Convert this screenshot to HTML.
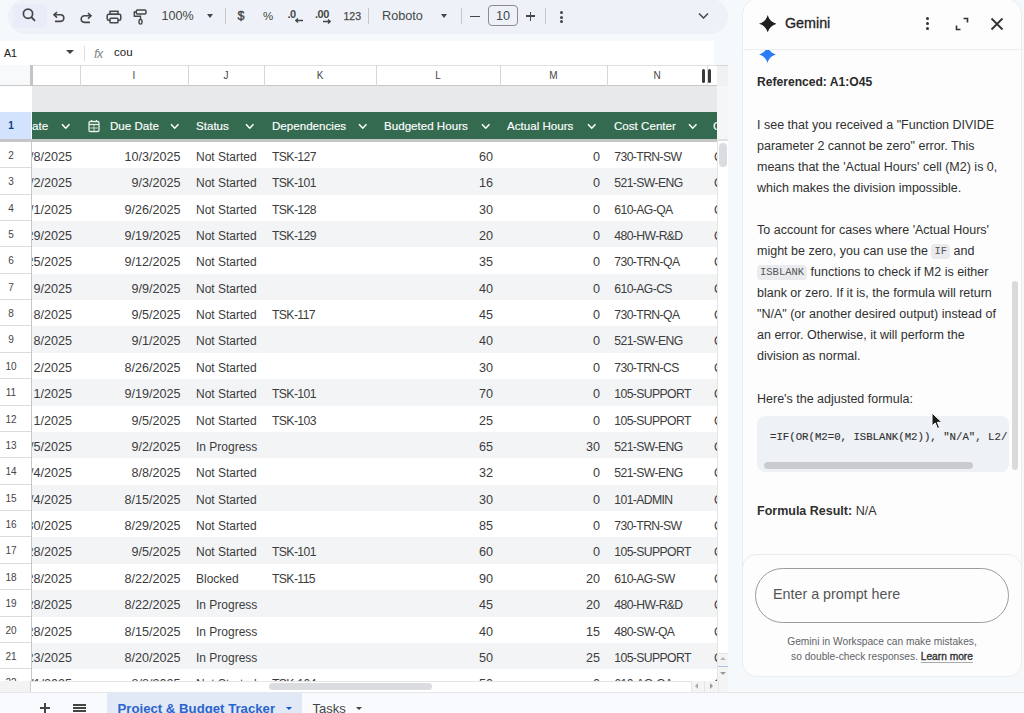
<!DOCTYPE html><html><head><meta charset="utf-8"><style>
*{margin:0;padding:0;box-sizing:border-box}
html,body{width:1024px;height:713px;overflow:hidden;background:#f5f9fb;font-family:"Liberation Sans",sans-serif;position:relative}
.a{position:absolute}
.t{position:absolute;white-space:nowrap;line-height:1}
.cell{position:absolute;white-space:nowrap;font-size:12px;color:#3c3c3c;line-height:26px;height:26px;padding-top:2px}
.num{font-size:12.6px}
.caps{font-size:12.2px;letter-spacing:-0.6px}
.r{text-align:right}
.rn{position:absolute;left:0;width:31px;font-size:10px;color:#444;text-align:center;text-indent:-9px;line-height:28px;border-bottom:1px solid #dcdcdc;background:#fff}
.hd{position:absolute;color:#fff;font-size:11.6px;line-height:27px;top:112px;white-space:nowrap;-webkit-text-stroke:0.15px #fff}
.chev{position:absolute;top:123px;width:9.5px;height:7px}
.g{font-size:12.5px;color:#303030;line-height:21px}
.chip{display:inline-block;font-family:'Liberation Mono',monospace;font-size:10.5px;color:#555;background:#e9ebee;border-radius:4px;padding:0 3px;line-height:15px;vertical-align:1px}
</style></head><body>

<div class="a" style="left:8px;top:-1px;width:720px;height:35px;border-radius:18px;background:#eef2f8"></div>
<div class="a" style="left:13px;top:3.5px;width:34px;height:24px;border-radius:4px;background:#e9edf9"></div>
<svg class="a" style="left:20px;top:6px" width="18" height="18" viewBox="0 0 18 18"><circle cx="8" cy="7.7" r="4.6" fill="none" stroke="#444746" stroke-width="1.7"/><line x1="11.3" y1="11" x2="15" y2="14.8" stroke="#444746" stroke-width="1.8"/></svg>
<svg class="a" style="left:52px;top:10px" width="14" height="13" viewBox="0 0 14 13"><path d="M5 2 L2 4.8 L5 7.6" fill="none" stroke="#444746" stroke-width="1.6"/><path d="M2.5 4.8 H8.5 A3.3 3.3 0 0 1 8.5 11.4 H3" fill="none" stroke="#444746" stroke-width="1.6"/></svg>
<svg class="a" style="left:79px;top:10.5px" width="14" height="13" viewBox="0 0 14 13"><path d="M9 2 L12 4.8 L9 7.6" fill="none" stroke="#444746" stroke-width="1.6"/><path d="M11.5 4.8 H5.5 A3.3 3.3 0 0 0 5.5 11.4 H11" fill="none" stroke="#444746" stroke-width="1.6"/></svg>
<svg class="a" style="left:106px;top:9.5px" width="16" height="14" viewBox="0 0 16 14"><rect x="4" y="1.3" width="8" height="3" fill="none" stroke="#444746" stroke-width="1.5"/><rect x="1.2" y="4.3" width="13.6" height="6" rx="1.5" fill="none" stroke="#444746" stroke-width="1.5"/><rect x="4" y="8.3" width="8" height="4.5" rx="0.8" fill="#edf2fa" stroke="#444746" stroke-width="1.5"/></svg>
<svg class="a" style="left:133px;top:8.5px" width="14" height="16" viewBox="0 0 14 16"><rect x="3.3" y="1" width="9.7" height="4" rx="1.2" fill="none" stroke="#444746" stroke-width="1.5"/><path d="M3.3 3 H1.3 V7.3 H7.5 V10.5" fill="none" stroke="#444746" stroke-width="1.4"/><rect x="6" y="10.5" width="3" height="4.6" rx="1.5" fill="none" stroke="#444746" stroke-width="1.4"/></svg>
<div class="t" style="left:161.5px;top:10px;font-size:12.6px;color:#444746">100%</div>
<div class="a" style="left:207px;top:14px;width:0;height:0;border-left:3px solid transparent;border-right:3px solid transparent;border-top:4px solid #444746"></div>
<div class="a" style="left:224.5px;top:8px;width:1px;height:16px;background:#c7c7c7"></div>
<div class="t" style="left:237.5px;top:9.5px;font-size:12.5px;color:#444746;-webkit-text-stroke:0.4px #444746">$</div>
<div class="t" style="left:263px;top:10.5px;font-size:11.5px;color:#444746">%</div>
<div class="t" style="left:287.5px;top:8.5px;font-size:11px;color:#444746;font-weight:bold;letter-spacing:-0.5px">.0</div>
<svg class="a" style="left:295px;top:18px" width="8" height="5" viewBox="0 0 8 5"><path d="M3 0.5 L0.8 2.5 L3 4.5 M1 2.5 H8" fill="none" stroke="#444746" stroke-width="1.3"/></svg>
<div class="t" style="left:315px;top:8.5px;font-size:11px;color:#444746;font-weight:bold;letter-spacing:-0.5px">.00</div>
<svg class="a" style="left:322.5px;top:18.5px" width="8" height="5" viewBox="0 0 8 5"><path d="M5 0.5 L7.2 2.5 L5 4.5 M0 2.5 H7" fill="none" stroke="#444746" stroke-width="1.3"/></svg>
<div class="t" style="left:343.5px;top:10.5px;font-size:10.5px;color:#444746;-webkit-text-stroke:0.25px #444746">123</div>
<div class="a" style="left:368.4px;top:8px;width:1px;height:16px;background:#c7c7c7"></div>
<div class="t" style="left:382px;top:10px;font-size:12.7px;color:#444746">Roboto</div>
<div class="a" style="left:441px;top:14px;width:0;height:0;border-left:3px solid transparent;border-right:3px solid transparent;border-top:4px solid #444746"></div>
<div class="a" style="left:461px;top:8px;width:1px;height:16px;background:#c7c7c7"></div>
<div class="a" style="left:470px;top:15.5px;width:9.5px;height:1.3px;background:#444746"></div>
<div class="a" style="left:488px;top:5px;width:30px;height:20.5px;border:1px solid #8c8c8c;border-radius:4px"></div>
<div class="t" style="left:488px;width:30px;text-align:center;top:10px;font-size:12.7px;color:#444746">10</div>
<div class="a" style="left:526px;top:15.3px;width:9px;height:1.6px;background:#444746"></div>
<div class="a" style="left:529.7px;top:11.5px;width:1.6px;height:9px;background:#444746"></div>
<div class="a" style="left:545px;top:8px;width:1px;height:16px;background:#c7c7c7"></div>
<div class="a" style="left:560px;top:11px;width:3px;height:3px;border-radius:50%;background:#444746"></div>
<div class="a" style="left:560px;top:15.5px;width:3px;height:3px;border-radius:50%;background:#444746"></div>
<div class="a" style="left:560px;top:20px;width:3px;height:3px;border-radius:50%;background:#444746"></div>
<svg class="a" style="left:698px;top:12px" width="11" height="8" viewBox="0 0 11 8"><path d="M1 1.5 L5.5 6 L10 1.5" fill="none" stroke="#444746" stroke-width="1.5"/></svg>
<div class="a" style="left:0;top:41px;width:714px;height:24px;background:#fff"></div>
<div class="t" style="left:4px;top:48px;font-size:10.5px;color:#222;-webkit-text-stroke:0.1px #222">A1</div>
<div class="a" style="left:66px;top:50px;width:0;height:0;border-left:4px solid transparent;border-right:4px solid transparent;border-top:4px solid #444"></div>
<div class="a" style="left:84px;top:46px;width:1px;height:15px;background:#ddd"></div>
<div class="t" style="left:94px;top:46.5px;font-size:13px;color:#8a8a8a;font-style:italic;letter-spacing:-0.8px">fx</div>
<div class="t" style="left:114px;top:47px;font-size:11.5px;color:#222">cou</div>
<div class="a" style="left:0;top:64.5px;width:728px;height:21.5px;background:#fff;border-bottom:1px solid #c7c7c7;border-top:1px solid #e0e0e0"></div>
<div class="a" style="left:0;top:65px;width:30px;height:21px;background:#f8f9fa;border-bottom:1px solid #c7c7c7"></div>
<div class="a" style="left:30px;top:65px;width:3px;height:21px;background:#c4c4c4"></div>
<div class="a" style="left:80px;top:65px;width:1px;height:21px;background:#d6d6d6"></div>
<div class="t" style="left:80px;width:108px;text-align:center;top:71px;font-size:10px;color:#444">I</div>
<div class="a" style="left:188px;top:65px;width:1px;height:21px;background:#d6d6d6"></div>
<div class="t" style="left:188px;width:76px;text-align:center;top:71px;font-size:10px;color:#444">J</div>
<div class="a" style="left:264px;top:65px;width:1px;height:21px;background:#d6d6d6"></div>
<div class="t" style="left:264px;width:112px;text-align:center;top:71px;font-size:10px;color:#444">K</div>
<div class="a" style="left:376px;top:65px;width:1px;height:21px;background:#d6d6d6"></div>
<div class="t" style="left:376px;width:124px;text-align:center;top:71px;font-size:10px;color:#444">L</div>
<div class="a" style="left:500px;top:65px;width:1px;height:21px;background:#d6d6d6"></div>
<div class="t" style="left:500px;width:107px;text-align:center;top:71px;font-size:10px;color:#444">M</div>
<div class="a" style="left:607px;top:65px;width:1px;height:21px;background:#d6d6d6"></div>
<div class="t" style="left:607px;width:100px;text-align:center;top:71px;font-size:10px;color:#444">N</div>
<div class="a" style="left:707px;top:65px;width:1px;height:21px;background:#d6d6d6"></div>
<div class="a" style="left:717px;top:65px;width:11px;height:21px;background:#f0f1f2;border-top:1px solid #d6d6d6"></div>
<div class="a" style="left:717px;top:86px;width:11px;height:53px;background:#f5f6f7"></div>
<div class="a" style="left:717px;top:139px;width:11px;height:2.5px;background:#dfe1e4"></div>
<div class="a" style="left:701.5px;top:69px;width:3px;height:14px;border-radius:1.5px;background:#3a3a3a"></div>
<div class="a" style="left:708.3px;top:69px;width:3px;height:14px;border-radius:1.5px;background:#3a3a3a"></div>
<div class="a" style="left:32px;top:86px;width:685px;height:26px;background:#e8e9eb"></div>
<div class="a" style="left:0;top:86px;width:32px;height:26px;background:#fff"></div>
<div class="a" style="left:0;top:112px;width:31px;height:27px;background:#d3e3fd"></div>
<div class="t" style="left:6px;width:10px;text-align:center;top:121px;font-size:10px;color:#0b3a8c;font-weight:bold">1</div>
<div class="a" style="left:32px;top:112px;width:685px;height:27px;background:#346a50"></div>
<div class="a" style="left:0;top:139px;width:717px;height:2.5px;background:#c6c6c6"></div>
<div class="hd" style="left:32px">ate</div>
<div class="hd" style="left:110px">Due Date</div>
<div class="hd" style="left:196px">Status</div>
<div class="hd" style="left:272px">Dependencies</div>
<div class="hd" style="left:384px">Budgeted Hours</div>
<div class="hd" style="left:507px">Actual Hours</div>
<div class="hd" style="left:614px">Cost Center</div>
<svg class="chev" style="left:61px" viewBox="0 0 9.5 7"><path d="M1 1.2 L4.75 5.2 L8.5 1.2" fill="none" stroke="#fff" stroke-width="1.5"/></svg>
<svg class="chev" style="left:170px" viewBox="0 0 9.5 7"><path d="M1 1.2 L4.75 5.2 L8.5 1.2" fill="none" stroke="#fff" stroke-width="1.5"/></svg>
<svg class="chev" style="left:245px" viewBox="0 0 9.5 7"><path d="M1 1.2 L4.75 5.2 L8.5 1.2" fill="none" stroke="#fff" stroke-width="1.5"/></svg>
<svg class="chev" style="left:358px" viewBox="0 0 9.5 7"><path d="M1 1.2 L4.75 5.2 L8.5 1.2" fill="none" stroke="#fff" stroke-width="1.5"/></svg>
<svg class="chev" style="left:481px" viewBox="0 0 9.5 7"><path d="M1 1.2 L4.75 5.2 L8.5 1.2" fill="none" stroke="#fff" stroke-width="1.5"/></svg>
<svg class="chev" style="left:587px" viewBox="0 0 9.5 7"><path d="M1 1.2 L4.75 5.2 L8.5 1.2" fill="none" stroke="#fff" stroke-width="1.5"/></svg>
<svg class="chev" style="left:688px" viewBox="0 0 9.5 7"><path d="M1 1.2 L4.75 5.2 L8.5 1.2" fill="none" stroke="#fff" stroke-width="1.5"/></svg>
<svg class="a" style="left:88px;top:119px" width="12" height="14" viewBox="0 0 12 14"><rect x="1" y="2.5" width="10" height="10" rx="1.2" fill="none" stroke="#e8f0ea" stroke-width="1.3"/><line x1="1" y1="5.5" x2="11" y2="5.5" stroke="#e8f0ea" stroke-width="1.3"/><line x1="3.5" y1="1" x2="3.5" y2="3" stroke="#e8f0ea" stroke-width="1.2"/><line x1="8.5" y1="1" x2="8.5" y2="3" stroke="#e8f0ea" stroke-width="1.2"/><line x1="2" y1="9" x2="10" y2="9" stroke="#e8f0ea" stroke-width="0.8"/><line x1="6" y1="6" x2="6" y2="12" stroke="#e8f0ea" stroke-width="0.8"/></svg>
<div class="a" style="left:707px;top:112px;width:10px;height:27px;overflow:hidden"><div class="hd" style="left:6px;top:0">C</div></div>
<div class="a" style="left:0;top:141.9px;width:717px;height:539px;overflow:hidden">
<div class="a" style="left:32px;top:0.00px;width:685px;height:26.37px;background:#fff"></div>
<div class="rn" style="top:0.00px;height:26.37px">2</div>
<div class="a" style="left:32px;width:48px;top:0.00px;height:26.37px;overflow:hidden"><div class="cell r num" style="right:8px;top:0">/8/2025</div></div>
<div class="cell r num" style="left:80px;width:100.5px;top:0.00px">10/3/2025</div>
<div class="cell" style="left:196px;top:0.00px">Not Started</div>
<div class="cell caps" style="left:272px;top:0.00px">TSK-127</div>
<div class="cell r num" style="left:376px;width:117px;top:0.00px">60</div>
<div class="cell r num" style="left:500px;width:100px;top:0.00px">0</div>
<div class="cell caps" style="left:614.3px;top:0.00px">730-TRN-SW</div>
<div class="cell" style="left:714px;top:0.00px">C</div>
<div class="a" style="left:32px;top:26.37px;width:685px;height:26.37px;background:#f3f4f6"></div>
<div class="rn" style="top:26.37px;height:26.37px">3</div>
<div class="a" style="left:32px;width:48px;top:26.37px;height:26.37px;overflow:hidden"><div class="cell r num" style="right:8px;top:0">/2/2025</div></div>
<div class="cell r num" style="left:80px;width:100.5px;top:26.37px">9/3/2025</div>
<div class="cell" style="left:196px;top:26.37px">Not Started</div>
<div class="cell caps" style="left:272px;top:26.37px">TSK-101</div>
<div class="cell r num" style="left:376px;width:117px;top:26.37px">16</div>
<div class="cell r num" style="left:500px;width:100px;top:26.37px">0</div>
<div class="cell caps" style="left:614.3px;top:26.37px">521-SW-ENG</div>
<div class="cell" style="left:714px;top:26.37px">C</div>
<div class="a" style="left:32px;top:52.74px;width:685px;height:26.37px;background:#fff"></div>
<div class="rn" style="top:52.74px;height:26.37px">4</div>
<div class="a" style="left:32px;width:48px;top:52.74px;height:26.37px;overflow:hidden"><div class="cell r num" style="right:8px;top:0">/1/2025</div></div>
<div class="cell r num" style="left:80px;width:100.5px;top:52.74px">9/26/2025</div>
<div class="cell" style="left:196px;top:52.74px">Not Started</div>
<div class="cell caps" style="left:272px;top:52.74px">TSK-128</div>
<div class="cell r num" style="left:376px;width:117px;top:52.74px">30</div>
<div class="cell r num" style="left:500px;width:100px;top:52.74px">0</div>
<div class="cell caps" style="left:614.3px;top:52.74px">610-AG-QA</div>
<div class="cell" style="left:714px;top:52.74px">C</div>
<div class="a" style="left:32px;top:79.11px;width:685px;height:26.37px;background:#f3f4f6"></div>
<div class="rn" style="top:79.11px;height:26.37px">5</div>
<div class="a" style="left:32px;width:48px;top:79.11px;height:26.37px;overflow:hidden"><div class="cell r num" style="right:8px;top:0">29/2025</div></div>
<div class="cell r num" style="left:80px;width:100.5px;top:79.11px">9/19/2025</div>
<div class="cell" style="left:196px;top:79.11px">Not Started</div>
<div class="cell caps" style="left:272px;top:79.11px">TSK-129</div>
<div class="cell r num" style="left:376px;width:117px;top:79.11px">20</div>
<div class="cell r num" style="left:500px;width:100px;top:79.11px">0</div>
<div class="cell caps" style="left:614.3px;top:79.11px">480-HW-R&amp;D</div>
<div class="cell" style="left:714px;top:79.11px">C</div>
<div class="a" style="left:32px;top:105.48px;width:685px;height:26.37px;background:#fff"></div>
<div class="rn" style="top:105.48px;height:26.37px">6</div>
<div class="a" style="left:32px;width:48px;top:105.48px;height:26.37px;overflow:hidden"><div class="cell r num" style="right:8px;top:0">25/2025</div></div>
<div class="cell r num" style="left:80px;width:100.5px;top:105.48px">9/12/2025</div>
<div class="cell" style="left:196px;top:105.48px">Not Started</div>
<div class="cell caps" style="left:272px;top:105.48px"></div>
<div class="cell r num" style="left:376px;width:117px;top:105.48px">35</div>
<div class="cell r num" style="left:500px;width:100px;top:105.48px">0</div>
<div class="cell caps" style="left:614.3px;top:105.48px">730-TRN-QA</div>
<div class="cell" style="left:714px;top:105.48px">C</div>
<div class="a" style="left:32px;top:131.85px;width:685px;height:26.37px;background:#f3f4f6"></div>
<div class="rn" style="top:131.85px;height:26.37px">7</div>
<div class="a" style="left:32px;width:48px;top:131.85px;height:26.37px;overflow:hidden"><div class="cell r num" style="right:8px;top:0">9/2025</div></div>
<div class="cell r num" style="left:80px;width:100.5px;top:131.85px">9/9/2025</div>
<div class="cell" style="left:196px;top:131.85px">Not Started</div>
<div class="cell caps" style="left:272px;top:131.85px"></div>
<div class="cell r num" style="left:376px;width:117px;top:131.85px">40</div>
<div class="cell r num" style="left:500px;width:100px;top:131.85px">0</div>
<div class="cell caps" style="left:614.3px;top:131.85px">610-AG-CS</div>
<div class="cell" style="left:714px;top:131.85px">C</div>
<div class="a" style="left:32px;top:158.22px;width:685px;height:26.37px;background:#fff"></div>
<div class="rn" style="top:158.22px;height:26.37px">8</div>
<div class="a" style="left:32px;width:48px;top:158.22px;height:26.37px;overflow:hidden"><div class="cell r num" style="right:8px;top:0">8/2025</div></div>
<div class="cell r num" style="left:80px;width:100.5px;top:158.22px">9/5/2025</div>
<div class="cell" style="left:196px;top:158.22px">Not Started</div>
<div class="cell caps" style="left:272px;top:158.22px">TSK-117</div>
<div class="cell r num" style="left:376px;width:117px;top:158.22px">45</div>
<div class="cell r num" style="left:500px;width:100px;top:158.22px">0</div>
<div class="cell caps" style="left:614.3px;top:158.22px">730-TRN-QA</div>
<div class="cell" style="left:714px;top:158.22px">C</div>
<div class="a" style="left:32px;top:184.59px;width:685px;height:26.37px;background:#f3f4f6"></div>
<div class="rn" style="top:184.59px;height:26.37px">9</div>
<div class="a" style="left:32px;width:48px;top:184.59px;height:26.37px;overflow:hidden"><div class="cell r num" style="right:8px;top:0">8/2025</div></div>
<div class="cell r num" style="left:80px;width:100.5px;top:184.59px">9/1/2025</div>
<div class="cell" style="left:196px;top:184.59px">Not Started</div>
<div class="cell caps" style="left:272px;top:184.59px"></div>
<div class="cell r num" style="left:376px;width:117px;top:184.59px">40</div>
<div class="cell r num" style="left:500px;width:100px;top:184.59px">0</div>
<div class="cell caps" style="left:614.3px;top:184.59px">521-SW-ENG</div>
<div class="cell" style="left:714px;top:184.59px">C</div>
<div class="a" style="left:32px;top:210.96px;width:685px;height:26.37px;background:#fff"></div>
<div class="rn" style="top:210.96px;height:26.37px">10</div>
<div class="a" style="left:32px;width:48px;top:210.96px;height:26.37px;overflow:hidden"><div class="cell r num" style="right:8px;top:0">2/2025</div></div>
<div class="cell r num" style="left:80px;width:100.5px;top:210.96px">8/26/2025</div>
<div class="cell" style="left:196px;top:210.96px">Not Started</div>
<div class="cell caps" style="left:272px;top:210.96px"></div>
<div class="cell r num" style="left:376px;width:117px;top:210.96px">30</div>
<div class="cell r num" style="left:500px;width:100px;top:210.96px">0</div>
<div class="cell caps" style="left:614.3px;top:210.96px">730-TRN-CS</div>
<div class="cell" style="left:714px;top:210.96px">C</div>
<div class="a" style="left:32px;top:237.33px;width:685px;height:26.37px;background:#f3f4f6"></div>
<div class="rn" style="top:237.33px;height:26.37px">11</div>
<div class="a" style="left:32px;width:48px;top:237.33px;height:26.37px;overflow:hidden"><div class="cell r num" style="right:8px;top:0">1/2025</div></div>
<div class="cell r num" style="left:80px;width:100.5px;top:237.33px">9/19/2025</div>
<div class="cell" style="left:196px;top:237.33px">Not Started</div>
<div class="cell caps" style="left:272px;top:237.33px">TSK-101</div>
<div class="cell r num" style="left:376px;width:117px;top:237.33px">70</div>
<div class="cell r num" style="left:500px;width:100px;top:237.33px">0</div>
<div class="cell caps" style="left:614.3px;top:237.33px">105-SUPPORT</div>
<div class="cell" style="left:714px;top:237.33px">C</div>
<div class="a" style="left:32px;top:263.70px;width:685px;height:26.37px;background:#fff"></div>
<div class="rn" style="top:263.70px;height:26.37px">12</div>
<div class="a" style="left:32px;width:48px;top:263.70px;height:26.37px;overflow:hidden"><div class="cell r num" style="right:8px;top:0">1/2025</div></div>
<div class="cell r num" style="left:80px;width:100.5px;top:263.70px">9/5/2025</div>
<div class="cell" style="left:196px;top:263.70px">Not Started</div>
<div class="cell caps" style="left:272px;top:263.70px">TSK-103</div>
<div class="cell r num" style="left:376px;width:117px;top:263.70px">25</div>
<div class="cell r num" style="left:500px;width:100px;top:263.70px">0</div>
<div class="cell caps" style="left:614.3px;top:263.70px">105-SUPPORT</div>
<div class="cell" style="left:714px;top:263.70px">C</div>
<div class="a" style="left:32px;top:290.07px;width:685px;height:26.37px;background:#f3f4f6"></div>
<div class="rn" style="top:290.07px;height:26.37px">13</div>
<div class="a" style="left:32px;width:48px;top:290.07px;height:26.37px;overflow:hidden"><div class="cell r num" style="right:8px;top:0">/5/2025</div></div>
<div class="cell r num" style="left:80px;width:100.5px;top:290.07px">9/2/2025</div>
<div class="cell" style="left:196px;top:290.07px">In Progress</div>
<div class="cell caps" style="left:272px;top:290.07px"></div>
<div class="cell r num" style="left:376px;width:117px;top:290.07px">65</div>
<div class="cell r num" style="left:500px;width:100px;top:290.07px">30</div>
<div class="cell caps" style="left:614.3px;top:290.07px">521-SW-ENG</div>
<div class="cell" style="left:714px;top:290.07px">C</div>
<div class="a" style="left:32px;top:316.44px;width:685px;height:26.37px;background:#fff"></div>
<div class="rn" style="top:316.44px;height:26.37px">14</div>
<div class="a" style="left:32px;width:48px;top:316.44px;height:26.37px;overflow:hidden"><div class="cell r num" style="right:8px;top:0">/4/2025</div></div>
<div class="cell r num" style="left:80px;width:100.5px;top:316.44px">8/8/2025</div>
<div class="cell" style="left:196px;top:316.44px">Not Started</div>
<div class="cell caps" style="left:272px;top:316.44px"></div>
<div class="cell r num" style="left:376px;width:117px;top:316.44px">32</div>
<div class="cell r num" style="left:500px;width:100px;top:316.44px">0</div>
<div class="cell caps" style="left:614.3px;top:316.44px">521-SW-ENG</div>
<div class="cell" style="left:714px;top:316.44px">C</div>
<div class="a" style="left:32px;top:342.81px;width:685px;height:26.37px;background:#f3f4f6"></div>
<div class="rn" style="top:342.81px;height:26.37px">15</div>
<div class="a" style="left:32px;width:48px;top:342.81px;height:26.37px;overflow:hidden"><div class="cell r num" style="right:8px;top:0">/4/2025</div></div>
<div class="cell r num" style="left:80px;width:100.5px;top:342.81px">8/15/2025</div>
<div class="cell" style="left:196px;top:342.81px">Not Started</div>
<div class="cell caps" style="left:272px;top:342.81px"></div>
<div class="cell r num" style="left:376px;width:117px;top:342.81px">30</div>
<div class="cell r num" style="left:500px;width:100px;top:342.81px">0</div>
<div class="cell caps" style="left:614.3px;top:342.81px">101-ADMIN</div>
<div class="cell" style="left:714px;top:342.81px">C</div>
<div class="a" style="left:32px;top:369.18px;width:685px;height:26.37px;background:#fff"></div>
<div class="rn" style="top:369.18px;height:26.37px">16</div>
<div class="a" style="left:32px;width:48px;top:369.18px;height:26.37px;overflow:hidden"><div class="cell r num" style="right:8px;top:0">30/2025</div></div>
<div class="cell r num" style="left:80px;width:100.5px;top:369.18px">8/29/2025</div>
<div class="cell" style="left:196px;top:369.18px">Not Started</div>
<div class="cell caps" style="left:272px;top:369.18px"></div>
<div class="cell r num" style="left:376px;width:117px;top:369.18px">85</div>
<div class="cell r num" style="left:500px;width:100px;top:369.18px">0</div>
<div class="cell caps" style="left:614.3px;top:369.18px">730-TRN-SW</div>
<div class="cell" style="left:714px;top:369.18px">C</div>
<div class="a" style="left:32px;top:395.55px;width:685px;height:26.37px;background:#f3f4f6"></div>
<div class="rn" style="top:395.55px;height:26.37px">17</div>
<div class="a" style="left:32px;width:48px;top:395.55px;height:26.37px;overflow:hidden"><div class="cell r num" style="right:8px;top:0">28/2025</div></div>
<div class="cell r num" style="left:80px;width:100.5px;top:395.55px">9/5/2025</div>
<div class="cell" style="left:196px;top:395.55px">Not Started</div>
<div class="cell caps" style="left:272px;top:395.55px">TSK-101</div>
<div class="cell r num" style="left:376px;width:117px;top:395.55px">60</div>
<div class="cell r num" style="left:500px;width:100px;top:395.55px">0</div>
<div class="cell caps" style="left:614.3px;top:395.55px">105-SUPPORT</div>
<div class="cell" style="left:714px;top:395.55px">C</div>
<div class="a" style="left:32px;top:421.92px;width:685px;height:26.37px;background:#fff"></div>
<div class="rn" style="top:421.92px;height:26.37px">18</div>
<div class="a" style="left:32px;width:48px;top:421.92px;height:26.37px;overflow:hidden"><div class="cell r num" style="right:8px;top:0">28/2025</div></div>
<div class="cell r num" style="left:80px;width:100.5px;top:421.92px">8/22/2025</div>
<div class="cell" style="left:196px;top:421.92px">Blocked</div>
<div class="cell caps" style="left:272px;top:421.92px">TSK-115</div>
<div class="cell r num" style="left:376px;width:117px;top:421.92px">90</div>
<div class="cell r num" style="left:500px;width:100px;top:421.92px">20</div>
<div class="cell caps" style="left:614.3px;top:421.92px">610-AG-SW</div>
<div class="cell" style="left:714px;top:421.92px">C</div>
<div class="a" style="left:32px;top:448.29px;width:685px;height:26.37px;background:#f3f4f6"></div>
<div class="rn" style="top:448.29px;height:26.37px">19</div>
<div class="a" style="left:32px;width:48px;top:448.29px;height:26.37px;overflow:hidden"><div class="cell r num" style="right:8px;top:0">28/2025</div></div>
<div class="cell r num" style="left:80px;width:100.5px;top:448.29px">8/22/2025</div>
<div class="cell" style="left:196px;top:448.29px">In Progress</div>
<div class="cell caps" style="left:272px;top:448.29px"></div>
<div class="cell r num" style="left:376px;width:117px;top:448.29px">45</div>
<div class="cell r num" style="left:500px;width:100px;top:448.29px">20</div>
<div class="cell caps" style="left:614.3px;top:448.29px">480-HW-R&amp;D</div>
<div class="cell" style="left:714px;top:448.29px">C</div>
<div class="a" style="left:32px;top:474.66px;width:685px;height:26.37px;background:#fff"></div>
<div class="rn" style="top:474.66px;height:26.37px">20</div>
<div class="a" style="left:32px;width:48px;top:474.66px;height:26.37px;overflow:hidden"><div class="cell r num" style="right:8px;top:0">28/2025</div></div>
<div class="cell r num" style="left:80px;width:100.5px;top:474.66px">8/15/2025</div>
<div class="cell" style="left:196px;top:474.66px">In Progress</div>
<div class="cell caps" style="left:272px;top:474.66px"></div>
<div class="cell r num" style="left:376px;width:117px;top:474.66px">40</div>
<div class="cell r num" style="left:500px;width:100px;top:474.66px">15</div>
<div class="cell caps" style="left:614.3px;top:474.66px">480-SW-QA</div>
<div class="cell" style="left:714px;top:474.66px">C</div>
<div class="a" style="left:32px;top:501.03px;width:685px;height:26.37px;background:#f3f4f6"></div>
<div class="rn" style="top:501.03px;height:26.37px">21</div>
<div class="a" style="left:32px;width:48px;top:501.03px;height:26.37px;overflow:hidden"><div class="cell r num" style="right:8px;top:0">23/2025</div></div>
<div class="cell r num" style="left:80px;width:100.5px;top:501.03px">8/20/2025</div>
<div class="cell" style="left:196px;top:501.03px">In Progress</div>
<div class="cell caps" style="left:272px;top:501.03px"></div>
<div class="cell r num" style="left:376px;width:117px;top:501.03px">50</div>
<div class="cell r num" style="left:500px;width:100px;top:501.03px">25</div>
<div class="cell caps" style="left:614.3px;top:501.03px">105-SUPPORT</div>
<div class="cell" style="left:714px;top:501.03px">C</div>
<div class="a" style="left:32px;top:527.40px;width:685px;height:26.37px;background:#fff"></div>
<div class="rn" style="top:527.40px;height:26.37px">22</div>
<div class="a" style="left:32px;width:48px;top:527.40px;height:26.37px;overflow:hidden"><div class="cell r num" style="right:8px;top:0">/1/2025</div></div>
<div class="cell r num" style="left:80px;width:100.5px;top:527.40px">8/8/2025</div>
<div class="cell" style="left:196px;top:527.40px">Not Started</div>
<div class="cell caps" style="left:272px;top:527.40px">TSK-104</div>
<div class="cell r num" style="left:376px;width:117px;top:527.40px">50</div>
<div class="cell r num" style="left:500px;width:100px;top:527.40px">0</div>
<div class="cell caps" style="left:614.3px;top:527.40px">610-AG-QA</div>
<div class="cell" style="left:714px;top:527.40px">C</div>
</div>
<div class="a" style="left:31px;top:141.5px;width:1px;height:539px;background:#c8c8c8"></div>
<div class="a" style="left:717px;top:141px;width:11px;height:540px;background:#fff;border-left:1px solid #e4e4e4"></div>
<div class="a" style="left:719px;top:143px;width:8px;height:24px;border-radius:4px;background:#dadce0"></div>
<div class="a" style="left:0;top:680.5px;width:728px;height:11px;background:#fff;border-top:1px solid #e4e4e4"></div>
<div class="a" style="left:0;top:680.5px;width:31px;height:11px;background:#f3f3f3;border-right:1px solid #ccc"></div>
<div class="a" style="left:269px;top:683px;width:163px;height:7px;border-radius:4px;background:#dadce0"></div>
<div class="a" style="left:717.5px;top:653px;width:10.5px;height:28px;background:#f4f4f4;border-top:1px solid #e6e6e6"></div>
<div class="a" style="left:719.5px;top:657px;width:0;height:0;border-left:3.5px solid transparent;border-right:3.5px solid transparent;border-bottom:3.5px solid #b5b5b5"></div>
<div class="a" style="left:719.5px;top:672px;width:0;height:0;border-left:3.5px solid transparent;border-right:3.5px solid transparent;border-top:3.5px solid #9a9a9a"></div>
<div class="a" style="left:718px;top:666px;width:9.5px;height:1px;background:#aac0ea"></div>
<div class="a" style="left:691px;top:681px;width:37px;height:10.5px;background:#f4f4f4;border-left:1px solid #e6e6e6"></div>
<div class="a" style="left:703.5px;top:681px;width:1px;height:10.5px;background:#e6e6e6"></div>
<div class="a" style="left:717.5px;top:681px;width:1px;height:10.5px;background:#e6e6e6"></div>
<div class="a" style="left:694.5px;top:683px;width:0;height:0;border-top:3.5px solid transparent;border-bottom:3.5px solid transparent;border-right:3.5px solid #aaa"></div>
<div class="a" style="left:709.5px;top:683px;width:0;height:0;border-top:3.5px solid transparent;border-bottom:3.5px solid transparent;border-left:3.5px solid #999"></div>
<div class="a" style="left:0;top:691.5px;width:1024px;height:22px;background:#f8fafd;border-top:1px solid #e6e6e6"></div>
<div class="a" style="left:107px;top:692px;width:195px;height:22px;background:#e1e9f7"></div>
<div class="t" style="left:117.5px;top:702px;font-size:13.2px;color:#2a64cc;font-weight:bold">Project &amp; Budget Tracker</div>
<div class="t" style="left:312.5px;top:702px;font-size:13px;color:#444">Tasks</div>
<div class="a" style="left:355.5px;top:707px;width:0;height:0;border-left:3px solid transparent;border-right:3px solid transparent;border-top:3.5px solid #444"></div>
<div class="a" style="left:286px;top:707px;width:0;height:0;border-left:3px solid transparent;border-right:3px solid transparent;border-top:3.5px solid #0b57d0"></div>
<div class="a" style="left:40px;top:707px;width:10px;height:1.5px;background:#444"></div>
<div class="a" style="left:44.3px;top:702.5px;width:1.5px;height:10.5px;background:#444"></div>
<div class="a" style="left:73px;top:704px;width:13px;height:1.6px;background:#444"></div>
<div class="a" style="left:73px;top:707.2px;width:13px;height:1.6px;background:#444"></div>
<div class="a" style="left:73px;top:710.4px;width:13px;height:1.6px;background:#444"></div>
<div class="a" style="left:742px;top:-2px;width:280px;height:679px;background:#fdfdfd;border-radius:16px;border:1px solid #ececec"></div>
<div class="a" style="left:743px;top:49px;width:278px;height:1px;background:#eeeeee"></div>
<div class="t" style="left:785px;top:15.5px;font-size:14.3px;color:#1f1f1f;-webkit-text-stroke:0.3px #1f1f1f">Gemini</div>
<svg class="a" style="left:758.5px;top:14.8px" width="17.5" height="17.5" viewBox="0 0 24 24"><path d="M12 0 C13.5 6 18 10.5 24 12 C18 13.5 13.5 18 12 24 C10.5 18 6 13.5 0 12 C6 10.5 10.5 6 12 0Z" fill="#1f1f1f"/></svg>
<div class="a" style="left:743px;top:50px;width:278px;height:504px;overflow:hidden">
<svg class="a" style="left:15.5px;top:-4.5px" width="17" height="17" viewBox="0 0 24 24"><path d="M12 0 C13.5 6 18 10.5 24 12 C18 13.5 13.5 18 12 24 C10.5 18 6 13.5 0 12 C6 10.5 10.5 6 12 0Z" fill="#2a7cf6"/></svg>
</div>
<div class="a" style="left:925.5px;top:17px;width:3px;height:3px;border-radius:50%;background:#333"></div>
<div class="a" style="left:925.5px;top:22px;width:3px;height:3px;border-radius:50%;background:#333"></div>
<div class="a" style="left:925.5px;top:27px;width:3px;height:3px;border-radius:50%;background:#333"></div>
<svg class="a" style="left:955px;top:16.5px" width="14" height="14" viewBox="0 0 14 14"><path d="M8.5 1.5 H12.5 V5.5 M1.5 8.5 V12.5 H5.5" fill="none" stroke="#333" stroke-width="1.6"/></svg>
<svg class="a" style="left:990px;top:16.5px" width="14" height="14" viewBox="0 0 14 14"><path d="M1.5 1.5 L12.5 12.5 M12.5 1.5 L1.5 12.5" fill="none" stroke="#333" stroke-width="1.8"/></svg>
<div class="t g" style="left:757px;top:72px;font-size:12.1px;font-weight:bold;color:#2a2a2a">Referenced: A1:O45</div>
<div class="t g" style="left:757px;top:115px">I see that you received a "Function DIVIDE</div>
<div class="t g" style="left:757px;top:136px">parameter 2 cannot be zero" error. This</div>
<div class="t g" style="left:757px;top:157px">means that the 'Actual Hours' cell (M2) is 0,</div>
<div class="t g" style="left:757px;top:178px">which makes the division impossible.</div>
<div class="t g" style="left:757px;top:220px">To account for cases where 'Actual Hours'</div>
<div class="t g" style="left:757px;top:241px">might be zero, you can use the <span class="chip">IF</span> and</div>
<div class="t g" style="left:757px;top:262px"><span class="chip">ISBLANK</span> functions to check if M2 is either</div>
<div class="t g" style="left:757px;top:283px">blank or zero. If it is, the formula will return</div>
<div class="t g" style="left:757px;top:304px">"N/A" (or another desired output) instead of</div>
<div class="t g" style="left:757px;top:325px">an error. Otherwise, it will perform the</div>
<div class="t g" style="left:757px;top:346px">division as normal.</div>
<div class="t g" style="left:757px;top:389px">Here's the adjusted formula:</div>
<div class="a" style="left:757px;top:416px;width:252px;height:56px;border-radius:8px;background:#eef2f7"></div>
<div class="t" style="left:770px;top:432px;font-size:10.7px;font-family:'Liberation Mono',monospace;color:#333;-webkit-text-stroke:0.15px #333;width:238px;overflow:hidden">=IF(OR(M2=0, ISBLANK(M2)), "N/A", L2/</div>
<div class="a" style="left:764px;top:462px;width:209px;height:7px;border-radius:4px;background:#c9cbce"></div>
<div class="t g" style="left:757px;top:501px"><b>Formula Result:</b> N/A</div>
<div class="a" style="left:1012px;top:281px;width:6px;height:189px;border-radius:3px;background:#dadada"></div>
<div class="a" style="left:742px;top:554px;width:280px;height:123px;background:#fdfdfd;border-radius:14px;border:1px solid #ececec"></div>
<div class="a" style="left:755px;top:568px;width:254px;height:55px;border-radius:28px;border:1px solid #9c9c9c;background:#fdfdfd"></div>
<div class="t" style="left:773px;top:587px;font-size:14.3px;color:#555">Enter a prompt here</div>
<div class="t" style="left:742px;width:280px;text-align:center;top:637px;font-size:10.2px;color:#5f6368">Gemini in Workspace can make mistakes,</div>
<div class="t" style="left:742px;width:280px;text-align:center;top:651.5px;font-size:10.2px;color:#5f6368">so double-check responses. <span style="color:#333;-webkit-text-stroke:0.35px #333;text-decoration:underline;text-decoration-color:#aaa;text-underline-offset:2px">Learn more</span></div>
<svg class="a" style="left:931px;top:412px" width="12" height="18" viewBox="0 0 12 18"><path d="M1 1 L1 14 L4.2 11 L6.5 16.5 L8.6 15.6 L6.3 10.3 L10.8 10.3 Z" fill="#1a1a1a" stroke="#fff" stroke-width="1"/></svg>
</body></html>
